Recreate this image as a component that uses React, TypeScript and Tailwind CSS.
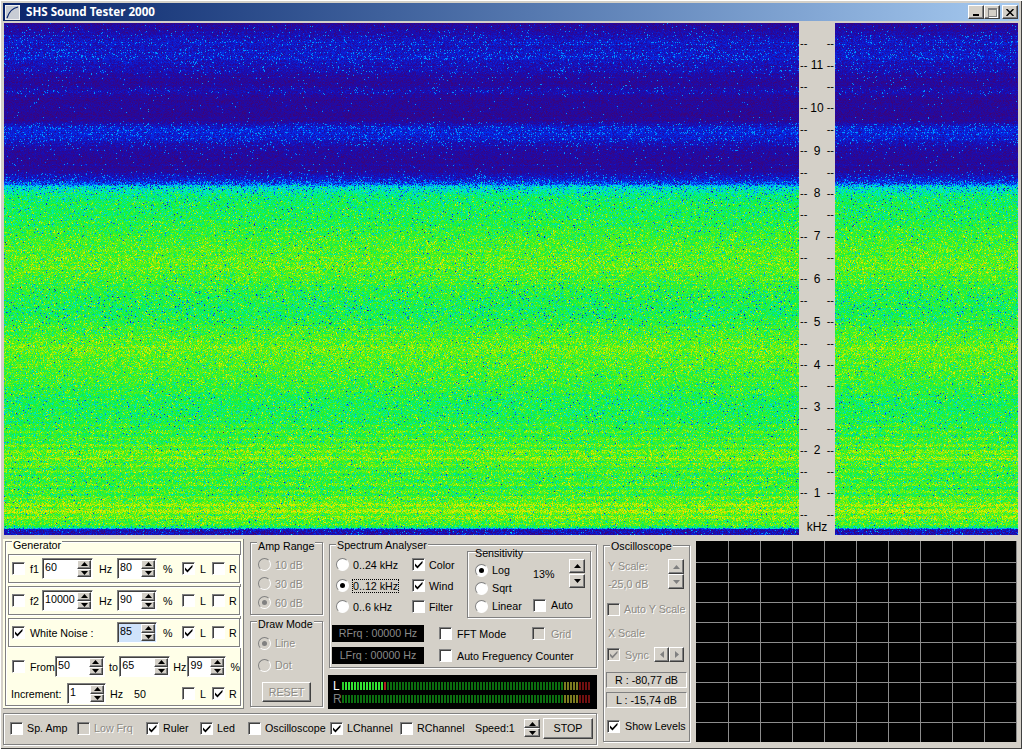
import React, { useEffect, useRef } from 'react';

const raised =
  'bg-[#d4d0c8] border border-t-white border-l-white border-r-[#404040] border-b-[#404040] shadow-[inset_-1px_-1px_0_#808080]';
const sunken =
  'border border-t-[#808080] border-l-[#808080] border-r-white border-b-white shadow-[inset_1px_1px_0_#404040]';
const etched = 'border border-[#808080] shadow-[inset_1px_1px_0_#fff,1px_1px_0_#fff]';
const dim = 'text-[#8c8a84] [text-shadow:1px_1px_0_#fff]';

// base level of the spectrum by screen row
const profile: [number, number][] = [
  [23, 0.12], [30, 0.15], [40, 0.2], [60, 0.2], [75, 0.15], [85, 0.12], [90, 0.17], [96, 0.12], [120, 0.12],
  [128, 0.22], [136, 0.23], [142, 0.17], [150, 0.14], [170, 0.13], [178, 0.2], [183, 0.3], [187, 0.42],
  [192, 0.49], [200, 0.54], [220, 0.57], [250, 0.63], [270, 0.64], [290, 0.59], [310, 0.56], [330, 0.61],
  [345, 0.65], [365, 0.63], [385, 0.6], [405, 0.56], [420, 0.57], [440, 0.61], [455, 0.66], [470, 0.61],
  [490, 0.61], [510, 0.68], [522, 0.64], [527, 0.55], [529, 0.2], [535, 0.17],
];

const stops: [number, number, number, number][] = [
  [0.08, 0x3c, 0x04, 0x78], [0.2, 0x1a, 0x0c, 0xb0], [0.3, 0x00, 0x30, 0xf0], [0.38, 0x00, 0x90, 0xff],
  [0.45, 0x00, 0xe0, 0xe0], [0.52, 0x00, 0xf0, 0x90], [0.6, 0x10, 0xf0, 0x40], [0.68, 0x60, 0xf0, 0x10],
  [0.76, 0xc0, 0xf0, 0x00], [0.85, 0xff, 0xe8, 0x00], [1, 0xff, 0x80, 0x00],
];

const baseAt = (y: number) => {
  for (let i = 1; i < profile.length; i++) {
    if (y <= profile[i][0]) {
      const [y0, v0] = profile[i - 1];
      const [y1, v1] = profile[i];
      return v0 + ((v1 - v0) * (y - y0)) / (y1 - y0);
    }
  }
  return 0.17;
};

const colorOf = (v: number) => {
  if (v <= stops[0][0]) return stops[0].slice(1);
  for (let i = 1; i < stops.length; i++) {
    if (v <= stops[i][0]) {
      const a = stops[i - 1];
      const b = stops[i];
      const t = (v - a[0]) / (b[0] - a[0]);
      return [a[1] + (b[1] - a[1]) * t, a[2] + (b[2] - a[2]) * t, a[3] + (b[3] - a[3]) * t];
    }
  }
  return stops[stops.length - 1].slice(1);
};

const makeRng = (seed: number) => () => {
  seed = (seed + 0x6d2b79f5) | 0;
  let t = Math.imul(seed ^ (seed >>> 15), 1 | seed);
  t = (t + Math.imul(t ^ (t >>> 7), 61 | t)) ^ t;
  return ((t ^ (t >>> 14)) >>> 0) / 4294967296;
};

const Spectrum: React.FC<{ width: number; seed: number }> = ({ width, seed }) => {
  const ref = useRef<HTMLCanvasElement>(null);

  useEffect(() => {
    const ctx = ref.current?.getContext('2d');
    if (!ctx) return;
    const rows = makeRng(7);
    const rnd = makeRng(seed);
    const img = ctx.createImageData(width, 512);
    const carry = new Float32Array(width);
    for (let r = 0; r < 512; r++) {
      const y = r + 23;
      const top = y < 180;
      const stripe = y > 420 && y < 525 ? 0.03 * Math.sin(y * 0.95) : 0;
      const rowGain = rows();
      const base = baseAt(y) + stripe + (rowGain - 0.5) * (top ? 0.03 : 0.035);
      const spotP = top ? Math.max(0, baseAt(y) - 0.11) * 0.8 * (0.3 + rowGain * 1.4) : 0.1;
      const dotP = top ? 0 : y > 285 && y < 330 ? 0.03 : 0.014;
      for (let x = 0; x < width; x++) {
        const gum = (top ? 0.03 : 0.05) * Math.log(-Math.log(rnd() * 0.999 + 0.0005));
        let n = gum;
        if (rnd() < spotP) {
          const amp = top ? 0.06 + rnd() * 0.13 : rnd() * 0.13;
          n += amp;
          carry[x] = Math.max(carry[x], amp);
        }
        n += carry[x] * 0.55;
        carry[x] *= 0.35;
        if (rnd() < dotP) n -= 0.14 + rnd() * 0.2;
        const v = base + n + 0.04;
        const c = colorOf(top ? Math.min(v, 0.385) : v);
        const p = (r * width + x) * 4;
        img.data[p] = c[0];
        img.data[p + 1] = c[1];
        img.data[p + 2] = c[2];
        img.data[p + 3] = 255;
      }
    }
    ctx.putImageData(img, 0, 0);
  }, [width, seed]);

  return <canvas ref={ref} width={width} height={512} className="block h-[512px] shrink-0 blur-[0.4px]" />;
};

const Tick = ({ className = '' }: { className?: string }) => (
  <svg viewBox="0 0 11 11" className={`w-[11px] h-[11px] ${className}`}>
    <path d="M2 4.5 L2 7 L4.5 9.5 L9.5 4 L9.5 1.8 L4.5 7 Z" fill="currentColor" />
  </svg>
);

const Check: React.FC<{ on?: boolean; off?: boolean; className?: string }> = ({ on, off, className = '' }) => (
  <div
    className={`w-[13px] h-[13px] shrink-0 flex items-center justify-center ${sunken} ${
      off ? 'bg-[#d4d0c8] text-[#808080]' : 'bg-white text-black'
    } ${className}`}
  >
    {on && <Tick />}
  </div>
);

const Radio: React.FC<{ on?: boolean; off?: boolean }> = ({ on, off }) => (
  <div
    className={`w-[13px] h-[13px] shrink-0 rounded-full flex items-center justify-center border border-t-[#808080] border-l-[#808080] border-r-white border-b-white ${
      off ? 'bg-[#d4d0c8]' : 'bg-white'
    }`}
  >
    {on && <div className={`w-[5px] h-[5px] rounded-full ${off ? 'bg-[#808080]' : 'bg-black'}`} />}
  </div>
);

const Arrow: React.FC<{ dir: 'up' | 'down' | 'left' | 'right'; off?: boolean }> = ({ dir, off }) => {
  const d = {
    up: 'M3.5 1 L7 5 L0 5 Z',
    down: 'M0 1 L7 1 L3.5 5 Z',
    left: 'M5 0 L5 7 L1 3.5 Z',
    right: 'M1 0 L5 3.5 L1 7 Z',
  }[dir];
  const vert = dir === 'up' || dir === 'down';
  return (
    <svg viewBox={vert ? '0 0 7 6' : '0 0 6 7'} className={vert ? 'w-[7px] h-[6px]' : 'w-[6px] h-[7px]'}>
      <path d={d} fill={off ? '#808080' : '#000'} />
    </svg>
  );
};

const Spin: React.FC<{ value: string; className: string; hot?: boolean }> = ({ value, className, hot }) => (
  <div
    className={`h-[21px] shrink-0 flex items-stretch ${sunken} ${hot ? 'bg-[#cfe3fb]' : 'bg-white'} ${className}`}
  >
    <span className="flex-1 pl-[2px] pt-[1px] leading-[14px]">{value}</span>
    <div className="w-[14px] flex flex-col m-[1px]">
      <div className={`flex-1 flex items-center justify-center ${raised}`}>
        <Arrow dir="up" />
      </div>
      <div className={`flex-1 flex items-center justify-center ${raised}`}>
        <Arrow dir="down" />
      </div>
    </div>
  </div>
);

const Group: React.FC<{ title: string; className: string; legend?: string; children?: React.ReactNode }> = ({
  title,
  className,
  legend = '-top-[6px]',
  children,
}) => (
  <div className={`relative shrink-0 ${etched} ${className}`}>
    <span className={`absolute left-[6px] px-[1px] leading-[13px] bg-inherit ${legend}`}>{title}</span>
    {children}
  </div>
);

const RulerRow: React.FC<{ label?: string }> = ({ label }) => (
  <div className="h-[21.4px] flex items-center justify-between px-[1px] text-[11px] leading-none">
    <span>--</span>
    <span className="text-[12px]">{label}</span>
    <span>--</span>
  </div>
);

const GenRow: React.FC<{
  on?: boolean;
  label: string;
  labelWidth: string;
  hz?: string;
  pct: string;
  hot?: boolean;
  l?: boolean;
  className?: string;
}> = ({ on, label, labelWidth, hz, pct, hot, l, className = '' }) => (
  <div className={`ml-[2px] w-[232px] h-[29px] flex items-center ${etched} ${className}`}>
    <Check on={on} className="ml-[3px]" />
    <span className={`ml-[5px] ${labelWidth}`}>{label}</span>
    {hz && (
      <>
        <Spin value={hz} className="w-[51px]" />
        <span className="ml-[6px] w-[18px]">Hz</span>
      </>
    )}
    <Spin value={pct} className="w-[40px]" hot={hot} />
    <span className="ml-[6px] w-[8px]">%</span>
    <Check on={l} className="ml-[11px]" />
    <span className="ml-[5px] w-[12px]">L</span>
    <Check />
    <span className="ml-[4px]">R</span>
  </div>
);

const Generator = () => (
  <div className="w-[241px] h-[170px] shrink-0 bg-[#ffffe8] border-r border-b border-[#808080] pl-[2px] pt-[2px]">
    <Group title="Generator" legend="-top-[3px]" className="w-[236px] h-[165px] bg-[#ffffe8]">
      <GenRow label="f1" labelWidth="w-[12px]" hz="60" pct="80" l className="mt-[12px]" />
      <GenRow label="f2" labelWidth="w-[12px]" hz="10000" pct="90" className="mt-[3px]" />
      <GenRow on label="White Noise :" labelWidth="w-[87px]" pct="85" hot l className="mt-[3px]" />
      <div className="mt-[9px] pl-[6px] flex items-center">
        <Check />
        <span className="ml-[5px] w-[26px]">From</span>
        <Spin value="50" className="w-[50px]" />
        <span className="ml-[4px] w-[11px]">to</span>
        <Spin value="65" className="w-[51px]" />
        <span className="ml-[3px] w-[15px]">Hz</span>
        <Spin value="99" className="w-[39px]" />
        <span className="ml-[4px]">%</span>
      </div>
      <div className="mt-[6px] pl-[5px] flex items-center">
        <span className="w-[56px]">Increment:</span>
        <Spin value="1" className="w-[39px]" />
        <span className="ml-[4px] w-[24px]">Hz</span>
        <span className="w-[48px]">50</span>
        <Check />
        <span className="ml-[5px] w-[12px]">L</span>
        <Check on />
        <span className="ml-[4px]">R</span>
      </div>
    </Group>
  </div>
);

const AmpColumn = () => (
  <div className="ml-[6px] w-[73px] shrink-0 pt-[3px]">
    <Group title="Amp Range" legend="-top-[3px]" className="w-[73px] h-[73px] bg-[#d4d0c8] pl-[7px] pt-[12px]">
      {['10 dB', '30 dB', '60 dB'].map((t, i) => (
        <div key={t} className="h-[19px] flex items-center">
          <Radio off on={i === 2} />
          <span className={`ml-[4px] ${dim}`}>{t}</span>
        </div>
      ))}
    </Group>
    <Group
      title="Draw Mode"
      legend="-top-[4px]"
      className="mt-[6px] w-[73px] h-[86px] bg-[#d4d0c8] pl-[7px] pt-[10px]"
    >
      {['Line', 'Dot'].map((t, i) => (
        <div key={t} className="h-[22px] flex items-center">
          <Radio off on={i === 0} />
          <span className={`ml-[4px] ${dim}`}>{t}</span>
        </div>
      ))}
      <div className={`mt-[6px] ml-[4px] w-[49px] h-[20px] flex items-center justify-center ${raised} ${dim}`}>
        RESET
      </div>
    </Group>
  </div>
);

const SpecRow: React.FC<{ label: string; on?: boolean; focus?: boolean; check: string; checked?: boolean }> = ({
  label,
  on,
  focus,
  check,
  checked,
}) => (
  <div className="h-[21px] flex items-center">
    <Radio on={on} />
    <div className="ml-[3px] w-[60px]">
      <span className={focus ? 'border border-dotted border-black' : 'border border-transparent'}>{label}</span>
    </div>
    <Check on={checked} />
    <span className="ml-[4px]">{check}</span>
  </div>
);

const SpectrumBox = () => (
  <Group title="Spectrum Analyser" className="w-[268px] h-[124px] bg-[#d4d0c8]">
    <div className="flex">
      <div className="w-[137px] pl-[6px] pt-[9px]">
        <SpecRow label="0..24 kHz" check="Color" checked />
        <SpecRow label="0..12 kHz" check="Wind" checked on focus />
        <SpecRow label="0..6 kHz" check="Filter" />
      </div>
      <Group title="Sensitivity" legend="-top-[5px]" className="mt-[6px] w-[124px] h-[67px] flex">
        <div className="w-[58px] ml-[7px] pt-[9px]">
          {['Log', 'Sqrt', 'Linear'].map((t, i) => (
            <div key={t} className="h-[18px] flex items-center">
              <Radio on={i === 0} />
              <span className="ml-[4px]">{t}</span>
            </div>
          ))}
        </div>
        <div className="pt-[7px]">
          <div className="flex items-center">
            <span className="w-[36px]">13%</span>
            <div className="w-[16px]">
              <div className={`h-[14px] flex items-center justify-center ${raised}`}>
                <Arrow dir="up" />
              </div>
              <div className={`h-[14px] mt-[1px] flex items-center justify-center ${raised}`}>
                <Arrow dir="down" />
              </div>
            </div>
          </div>
          <div className="mt-[8px] h-[18px] flex items-center">
            <Check />
            <span className="ml-[5px]">Auto</span>
          </div>
        </div>
      </Group>
    </div>
    <div className="mt-[7px] ml-[2px] h-[17px] flex items-center">
      <div className="w-[92px] h-[17px] bg-black text-[#8a8a8a] text-center leading-[16px]">RFrq : 00000 Hz</div>
      <Check className="ml-[15px]" />
      <span className="ml-[5px] w-[75px]">FFT Mode</span>
      <Check off />
      <span className={`ml-[6px] ${dim}`}>Grid</span>
    </div>
    <div className="mt-[5px] ml-[2px] h-[17px] flex items-center">
      <div className="w-[92px] h-[17px] bg-black text-[#8a8a8a] text-center leading-[16px]">LFrq : 00000 Hz</div>
      <Check className="ml-[15px]" />
      <span className="ml-[5px]">Auto Freguency Counter</span>
    </div>
  </Group>
);

const segColor = (i: number, lit: boolean) => {
  if (lit) return i === 14 ? 'bg-[#b02020]' : i % 5 === 0 ? 'bg-[#28d028]' : 'bg-[#34e634]';
  if (i >= 79) return 'bg-[#701010]';
  if (i >= 74) return 'bg-[#7c7c20]';
  return 'bg-[#0b6e0f]';
};

const MeterRow: React.FC<{ label: string; lit: number; labelClass: string }> = ({ label, lit, labelClass }) => (
  <div className="h-[13px] flex items-center">
    <span className={`w-[9px] text-[12px] leading-none ${labelClass}`}>{label}</span>
    <div className="flex gap-[1px]">
      {Array.from({ length: 83 }, (_, i) => (
        <div key={i} className={`w-[2px] h-[8px] ${segColor(i, i < lit)}`} />
      ))}
    </div>
  </div>
);

const Meter = () => (
  <div className="-ml-[1px] mt-[7px] w-[269px] h-[34px] bg-black pl-[5px] pt-[4px]">
    <MeterRow label="L" lit={15} labelClass="text-white" />
    <MeterRow label="R" lit={0} labelClass="text-[#808080]" />
  </div>
);

const Tool: React.FC<{ on?: boolean; off?: boolean; label: string; width: string }> = ({ on, off, label, width }) => (
  <>
    <Check on={on} off={off} />
    <span className={`ml-[4px] ${width} ${off ? dim : ''}`}>{label}</span>
  </>
);

const BottomBar = () => (
  <div className={`mt-[4px] w-[594px] h-[32px] flex items-center pl-[6px] pb-[2px] ${etched}`}>
    <Tool label="Sp. Amp" width="w-[50px]" />
    <Tool off label="Low Frq" width="w-[52px]" />
    <Tool on label="Ruler" width="w-[37px]" />
    <Tool on label="Led" width="w-[31px]" />
    <Tool label="Oscilloscope" width="w-[65px]" />
    <Tool on label="LChannel" width="w-[53px]" />
    <Tool label="RChannel" width="w-[58px]" />
    <span className="w-[49px]">Speed:1</span>
    <div className="w-[16px]">
      <div className={`h-[9px] flex items-center justify-center ${raised}`}>
        <Arrow dir="up" />
      </div>
      <div className={`h-[9px] flex items-center justify-center ${raised}`}>
        <Arrow dir="down" />
      </div>
    </div>
    <div className={`ml-[3px] w-[50px] h-[21px] flex items-center justify-center ${raised}`}>STOP</div>
  </div>
);

const Oscilloscope = () => (
  <Group title="Oscilloscope" className="ml-[6px] mt-[6px] w-[87px] h-[197px] bg-[#d4d0c8]">
    <div className="flex pl-[4px] pt-[13px]">
      <div className="w-[60px]">
        <div className={`leading-[14px] ${dim}`}>Y Scale:</div>
        <div className={`mt-[4px] leading-[14px] ${dim}`}>-25,0 dB</div>
      </div>
      <div className="w-[16px]">
        <div className={`h-[15px] flex items-center justify-center ${raised}`}>
          <Arrow dir="up" off />
        </div>
        <div className={`h-[15px] flex items-center justify-center ${raised}`}>
          <Arrow dir="down" off />
        </div>
      </div>
    </div>
    <div className="mt-[11px] ml-[3px] flex items-center">
      <Check off />
      <span className={`ml-[4px] ${dim}`}>Auto Y Scale</span>
    </div>
    <div className={`mt-[10px] ml-[4px] leading-[14px] ${dim}`}>X Scale</div>
    <div className="mt-[7px] ml-[3px] flex items-center">
      <Check on off />
      <span className={`ml-[5px] w-[29px] ${dim}`}>Sync</span>
      <div className={`w-[15px] h-[15px] flex items-center justify-center ${raised}`}>
        <Arrow dir="left" off />
      </div>
      <div className={`w-[15px] h-[15px] flex items-center justify-center ${raised}`}>
        <Arrow dir="right" off />
      </div>
    </div>
    <div className={`mt-[10px] ml-[2px] w-[81px] h-[16px] text-center leading-[15px] ${sunken} shadow-none`}>
      R : -80,77 dB
    </div>
    <div className={`mt-[4px] ml-[2px] w-[81px] h-[16px] text-center leading-[15px] ${sunken} shadow-none`}>
      L : -15,74 dB
    </div>
    <div className="mt-[11px] ml-[3px] flex items-center">
      <Check on />
      <span className="ml-[5px]">Show Levels</span>
    </div>
  </Group>
);

const Scope = () => (
  <div className="ml-[6px] mt-[2px] w-[321px] h-[201px] bg-black overflow-hidden grid grid-cols-[33px_repeat(9,32px)] grid-rows-[22px_repeat(9,20px)]">
    {Array.from({ length: 100 }, (_, i) => (
      <div key={i} className="border-r border-b border-[#8c8c8c]" />
    ))}
  </div>
);

const TitleBar = () => (
  <div className="mx-[3px] h-[18px] flex items-center bg-gradient-to-r from-[#0a246a] to-[#a6caf0]">
    <div className="ml-[2px] w-[15px] h-[15px] bg-[#c8ccd4] border border-[#f0f0f0]">
      <svg viewBox="0 0 13 13" className="w-[13px] h-[13px]">
        <path d="M1 12 C3 6 6 2 12 1" fill="none" stroke="#0a246a" strokeWidth="1.2" />
      </svg>
    </div>
    <span className="ml-[6px] text-white font-bold text-[11.6px] font-['Noto_Sans',sans-serif]">
      SHS Sound Tester 2000
    </span>
    <div className="ml-auto mr-[1px] flex">
      <div className={`w-[16px] h-[14px] flex items-end justify-center pb-[2px] ${raised}`}>
        <div className="w-[6px] h-[2px] bg-black" />
      </div>
      <div className={`w-[16px] h-[14px] flex items-center justify-center ${raised}`}>
        <div className="w-[9px] h-[9px] border border-[#808080] border-t-2 shadow-[1px_1px_0_#fff]" />
      </div>
      <div className={`ml-[2px] w-[16px] h-[14px] flex items-center justify-center ${raised}`}>
        <svg viewBox="0 0 8 7" className="w-[8px] h-[7px]">
          <path d="M0.5 0 L7.5 7 M7.5 0 L0.5 7" stroke="#000" strokeWidth="1.5" />
        </svg>
      </div>
    </div>
  </div>
);

const rulerLabels = ['11', '10', '9', '8', '7', '6', '5', '4', '3', '2', '1'];

export default function App() {
  return (
    <div className="w-[1022px] h-[749px] overflow-hidden pt-[3px] bg-[#d4d0c8] text-black text-[10.7px] leading-[14px] font-['Liberation_Sans',sans-serif] shadow-[inset_1px_1px_0_#fff,inset_-1px_-1px_0_#404040]">
      <TitleBar />

      {/* spectrum + ruler */}
      <div className="mt-[2px] ml-[4px] h-[512px] flex">
        <Spectrum width={795} seed={11} />
        <div className="relative z-10 w-[36px] shrink-0 pt-[10px] bg-[#d4d0c8]">
          <RulerRow />
          {rulerLabels.map((l) => (
            <React.Fragment key={l}>
              <RulerRow label={l} />
              <RulerRow />
            </React.Fragment>
          ))}
          <div className="-mt-[5px] text-center text-[12px] leading-[14px]">kHz</div>
        </div>
        <Spectrum width={183} seed={23} />
      </div>

      {/* control panels */}
      <div className="mt-[4px] ml-[3px] flex items-start">
        <div className="w-[594px] shrink-0">
          <div className="h-[170px] flex">
            <Generator />
            <AmpColumn />
            <div className="ml-[6px] pt-[5px]">
              <SpectrumBox />
              <Meter />
            </div>
          </div>
          <BottomBar />
        </div>
        <Oscilloscope />
        <Scope />
      </div>
    </div>
  );
}
